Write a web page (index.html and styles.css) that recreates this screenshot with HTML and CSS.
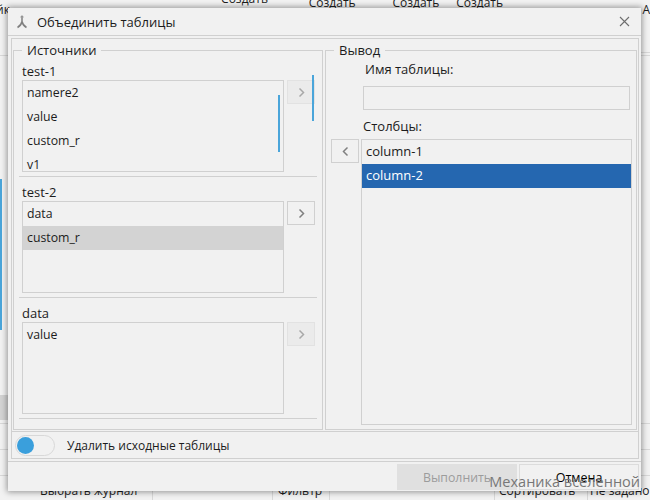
FILE: index.html
```html
<!DOCTYPE html>
<html lang="ru">

<head>
	<meta charset="utf-8">
	<title>Объединить таблицы</title>
	<link rel="stylesheet" href="styles.css">
</head>

<body>
	<!-- main window behind the dialog -->
	<div class="app">
		<div class="app-top">
			<span class="top-left">йк</span>
			<span class="top-cell first">Создать</span>
			<span class="top-cell second">Создать</span>
			<span class="top-cell third">Создать</span>
			<span class="top-cell fourth">Создать</span>
			<span class="top-right">А</span>
		</div>
		<div class="app-mid">
			<div class="side side-left">
				<div class="side-line l1"></div>
				<div class="side-blue"></div>
				<div class="side-gray"></div>
				<div class="side-line l2"></div>
				<div class="side-line l3"></div>
				<div class="side-line l3"></div>
			</div>
			<div class="side side-right">
				<div class="side-line r1"></div>
				<div class="side-line r2"></div>
				<div class="side-line r3"></div>
				<div class="side-line r4"></div>
				<div class="side-line r5"></div>
			</div>
		</div>
		<div class="app-bottom">
			<span class="bot-cell b1">Выбрать журнал</span>
			<span class="bot-cell b2"></span>
			<span class="bot-cell b3">Фильтр</span>
			<span class="bot-cell b4"></span>
			<span class="bot-cell b5">Сортировать</span>
			<span class="bot-cell b6">Не задано</span>
		</div>
	</div>

	<div class="dialog">
		<div class="title-bar">
			<svg class="title-icon" width="12" height="14" viewBox="0 0 12 14">
				<path d="M6 1.500v5M6 6.500C5.500 9 4 11 1.500 12.500M6 6.500c.5 2.500 2 4.500 4.500 6" fill="none" stroke="#808080" stroke-width="1.500"/>
				<path d="M4.500 2 6 .8 7.500 2" fill="none" stroke="#808080" stroke-width="1"/>
			</svg>
			<span class="title-text">Объединить таблицы</span>
			<svg class="close-icon" width="11" height="11" viewBox="0 0 11 11">
				<path d="M1 1l9 9M10 1l-9 9" fill="none" stroke="#6e6e6e" stroke-width="1.100"/>
			</svg>
		</div>

		<div class="frame">
			<div class="panels">
				<fieldset class="panel panel-src">
					<legend>Источники</legend>

					<div class="src-label">test-1</div>
					<div class="src-row">
						<div class="list src-list">
							<div class="list-item">namere2</div>
							<div class="list-item">value</div>
							<div class="list-item">custom_r</div>
							<div class="list-item">v1</div>
							<div class="scroll scroll-list"></div>
						</div>
						<button class="arrow-btn disabled">
							<svg width="7" height="11" viewBox="0 0 7 11"><path d="M1.500 1.500 5.500 5.500 1.500 9.500" fill="none" stroke="#a8a8a8" stroke-width="1.500"/></svg>
						</button>
						<div class="scroll scroll-panel"></div>
					</div>
					<div class="src-sep"></div>

					<div class="src-label">test-2</div>
					<div class="src-row">
						<div class="list src-list">
							<div class="list-item">data</div>
							<div class="list-item gray-sel">custom_r</div>
						</div>
						<button class="arrow-btn">
							<svg width="7" height="11" viewBox="0 0 7 11"><path d="M1.500 1.500 5.500 5.500 1.500 9.500" fill="none" stroke="#808080" stroke-width="1.500"/></svg>
						</button>
					</div>
					<div class="src-sep"></div>

					<div class="src-label">data</div>
					<div class="src-row">
						<div class="list src-list">
							<div class="list-item">value</div>
						</div>
						<button class="arrow-btn disabled">
							<svg width="7" height="11" viewBox="0 0 7 11"><path d="M1.500 1.500 5.500 5.500 1.500 9.500" fill="none" stroke="#a8a8a8" stroke-width="1.500"/></svg>
						</button>
					</div>
					<div class="src-sep"></div>
				</fieldset>

				<fieldset class="panel panel-out">
					<legend>Вывод</legend>

					<div class="out-name">
						<div class="name-label">Имя таблицы:</div>
						<div class="name-input"></div>
						<div class="cols-label">Столбцы:</div>
					</div>
					<div class="out-cols">
						<button class="arrow-btn">
							<svg width="7" height="11" viewBox="0 0 7 11"><path d="M5.500 1.500 1.500 5.500 5.500 9.500" fill="none" stroke="#808080" stroke-width="1.500"/></svg>
						</button>
						<div class="list cols-list">
							<div class="list-item">column-1</div>
							<div class="list-item blue-sel">column-2</div>
						</div>
					</div>
				</fieldset>
			</div>

			<div class="toggle-row">
				<div class="toggle"><div class="toggle-knob"></div></div>
				<span class="toggle-label">Удалить исходные таблицы</span>
			</div>
		</div>

		<div class="footer">
			<button class="foot-btn run">Выполнить</button>
			<button class="foot-btn cancel">Отмена</button>
		</div>
	</div>

	<div class="watermark">Механика вселенной</div>
</body>

</html>
```

FILE: styles.css
```css
:root {
	--bg: #f1f1f1;
	--line: #d0d0d0;
	--text: #1c1c1c;
	--scroll: #4aa5da;
}
* {
	box-sizing: border-box;
}
html, body {
	margin: 0;
	height: 500px;
	overflow: hidden;
}
body {
	font-family: "Open Sans", "Noto Sans", sans-serif;
	font-size: 13px;
	color: var(--text);
	background: #f2f2f2;
}

/* main window */
.app {
	height: 500px;
	display: flex;
	flex-direction: column;
	font-size: 12px;
}
.app-top {
	height: 14px;
	display: flex;
	align-items: flex-start;
	flex: none;
}
.top-left {
	width: 226px;
	margin-left: -4px;
	line-height: 18px;
	margin-top: 1px;
}
.top-cell {
	line-height: 18px;
	margin-top: -6px;
}
.top-cell.first {
	margin-top: -10px;
	width: 88px;
}
.top-cell.second {
	width: 84px;
}
.top-cell.third {
	width: 64px;
}
.top-cell.fourth {
	width: 187px;
}
.top-right {
	line-height: 18px;
	margin-top: 1px;
}
.app-mid {
	flex: 1;
	display: flex;
	justify-content: space-between;
}
.side {
	width: 9px;
	display: flex;
	flex-direction: column;
}
.side-line {
	height: 1px;
	background: #d8d8d8;
}
.l1 {
	margin-top: 41px;
}
.side-blue {
	width: 2px;
	height: 151px;
	margin-top: 123px;
	background: var(--scroll);
}
.side-gray {
	height: 25px;
	margin-top: 65px;
	background: #d3d3d3;
}
.l2 {
	margin-top: 3px;
}
.l3 {
	margin-top: 25px;
}
.r1 {
	margin-top: 38px;
}
.r2 {
	margin-top: 2px;
}
.r3 {
	margin-top: 367px;
}
.r4 {
	margin-top: 25px;
}
.r5 {
	margin-top: 25px;
}
.app-bottom {
	height: 20px;
	display: flex;
	flex: none;
	overflow: hidden;
}
.bot-cell {
	height: 20px;
	flex: none;
	padding-top: 2px;
	line-height: 18px;
	border-right: 1px solid #d8d8d8;
	white-space: nowrap;
}
.b1 {
	width: 153px;
	padding-left: 40px;
}
.b2 {
	width: 120px;
}
.b3 {
	width: 57px;
	padding-left: 5px;
}
.b4 {
	width: 165px;
}
.b5 {
	width: 93px;
	padding-left: 4px;
}
.b6 {
	width: 62px;
	padding-left: 2px;
	border-right: 0;
}

/* dialog */
.dialog {
	position: absolute;
	left: 8px;
	top: 8px;
	width: 633px;
	height: 483px;
	background: var(--bg);
	box-shadow: 0 0 6px 1px rgba(0, 0, 0, 0.4);
	display: flex;
	flex-direction: column;
}
.title-bar {
	height: 28px;
	flex: none;
	display: flex;
	align-items: center;
	padding: 0 11px 0 8px;
	border-bottom: 1px solid var(--line);
}
.title-icon {
	flex: none;
	margin-right: 9px;
}
.title-text {
	flex: 1;
}
.frame {
	height: 421px;
	flex: none;
	margin: 2px 2px 0 3px;
	border: 1px solid var(--line);
	display: flex;
	flex-direction: column;
}
.panels {
	flex: 1;
	display: flex;
	gap: 2px;
	padding: 2px 1px 0;
	min-height: 0;
}
.panel {
	margin: 0;
	padding: 0;
	min-width: 0;
	border: 1px solid var(--line);
	display: flex;
	flex-direction: column;
}
.panel legend {
	padding: 0 5px;
	margin-left: 3px;
	line-height: 18px;
	height: 18px;
}
.panel-src {
	width: 310px;
	padding: 3px 5px 0 5px;
	position: relative;
}
.panel-out {
	width: 312px;
	padding: 0 4px 4px 5px;
}
.src-label {
	height: 18px;
	line-height: 18px;
	padding-left: 3px;
}
.src-row {
	display: flex;
	align-items: flex-start;
	gap: 3px;
	padding-left: 3px;
}
.src-sep {
	height: 1px;
	margin: 4px 0 6px;
	background: var(--line);
}
.list {
	border: 1px solid var(--line);
	overflow: hidden;
	position: relative;
}
.src-list {
	width: 262px;
	height: 92px;
	flex: none;
	font-size: 12.3px;
}
.list-item {
	height: 24px;
	line-height: 24px;
	padding-left: 4px;
}
.cols-list .list-item {
	line-height: 22px;
}
.gray-sel {
	background: #d3d3d3;
}
.blue-sel {
	background: #2567b0;
	color: #fff;
}
.arrow-btn {
	width: 28px;
	height: 24px;
	flex: none;
	padding: 0;
	border: 1px solid var(--line);
	background: var(--bg);
	display: flex;
	align-items: center;
	justify-content: center;
}
.arrow-btn.disabled {
	background: #ebebeb;
	border-color: #e2e2e2;
}

/* overlay scrollbars */
.scroll {
	position: absolute;
	width: 2px;
	background: var(--scroll);
}
.scroll-list {
	right: 3px;
	top: 14px;
	height: 57px;
}
.scroll-panel {
	left: 298px;
	top: 16px;
	height: 46px;
}

.out-name {
	padding: 1px 2px 0 32px;
}
.name-label {
	height: 18px;
	line-height: 18px;
	padding-left: 2px;
}
.name-input {
	height: 24px;
	margin-top: 8px;
	border: 1px solid var(--line);
}
.cols-label {
	height: 18px;
	line-height: 18px;
	margin: 7px 0 4px;
}
.out-cols {
	flex: 1;
	display: flex;
	align-items: flex-start;
	gap: 2px;
	min-height: 0;
}
.cols-list {
	flex: 1;
	height: 100%;
}
.toggle-row {
	height: 27px;
	flex: none;
	margin-top: 1px;
	border-top: 1px solid var(--line);
	display: flex;
	align-items: center;
	padding-left: 3px;
	font-size: 12px;
}
.toggle {
	width: 40px;
	height: 21px;
	border: 1px solid #d8d8d8;
	border-radius: 11px;
	padding: 1px;
	margin-right: 12px;
}
.toggle-knob {
	width: 17px;
	height: 17px;
	border-radius: 50%;
	background: #3a9fdc;
}
.footer {
	flex: 1;
	margin-top: 2px;
	border-top: 1px solid var(--line);
	display: flex;
	justify-content: flex-end;
	gap: 2px;
	padding: 2px 2px 0 0;
}
.foot-btn {
	width: 120px;
	height: 26px;
	padding: 0;
	font: inherit;
}
.run {
	background: #e0e0e0;
	border: 0;
	color: #9c9c9c;
	font-size: 12.300px;
}
.cancel {
	background: var(--bg);
	border: 1px solid #dcdcdc;
	color: #000;
	font-size: 12.500px;
}
.watermark {
	position: absolute;
	right: 10px;
	top: 471px;
	font-size: 14.500px;
	line-height: 22px;
	color: #777;
}
```
